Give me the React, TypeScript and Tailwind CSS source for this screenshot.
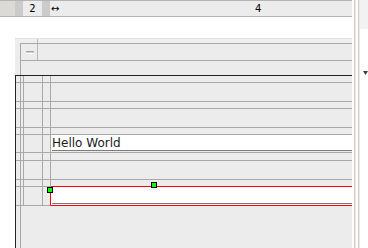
const line = 'border-[#a9a9a9]'

const rows = [7, 19, 7, 19, 7, 18, 8, 19, 7, 19]

function Handle({ className }: { className: string }) {
  return <div className={`absolute w-[6px] h-[6px] bg-[#00ff00] border border-black ${className}`} />
}

function TableRow({ h, index }: { h: number; index: number }) {
  const hello = index === 5
  const selected = index === 9
  const aboveSelected = index === 8
  return (
    <div className="flex shrink-0" style={{ height: h }}>
      <div className={`w-[5px] border-r border-b ${line}`} />
      <div className={`w-[3px] border-r border-b ${line}`} />
      <div className={`w-[19px] border-r border-b ${line}`} />
      <div className={`w-[8px] border-b ${line} border-r ${selected ? 'border-r-[#ff0000]' : ''}`} />
      <div
        className={`flex-1 border-b flex flex-col ${
          selected || aboveSelected ? 'border-[#ff0000]' : line
        } ${selected ? 'bg-white' : ''}`}
      >
        {hello && (
          <>
            <div className="h-[15px] bg-white pl-[1px] pt-[1px] text-[12px] leading-[14px] text-[#1a1a1a] whitespace-nowrap">
              Hello World
            </div>
            <div className="h-px bg-white">
              <div className="ml-[1px] h-px bg-[#787c80]" />
            </div>
          </>
        )}
        {selected && (
          <>
            <div className="h-[16px]" />
            <div className="ml-[1px] h-px bg-[#787c80]" />
          </>
        )}
      </div>
    </div>
  )
}

export default function App() {
  return (
    <div className="relative flex w-[368px] h-[248px] overflow-hidden bg-white font-['DejaVu_Sans',sans-serif] text-black">
      <div className="flex w-[352px] flex-col">
        {/* ruler */}
        <div className="flex h-[17px] shrink-0 border-t border-b border-[#b4b4b4] bg-[#ececec] text-[10px] leading-[15px]">
          <div className="w-[15px] bg-[#dcdad6]" />
          <div className="w-[8px] bg-[#cbcbcb]" />
          <div className="w-[19px] text-center">2</div>
          <div className="w-[8px] bg-[#cbcbcb]" />
          <div className="flex flex-1">
            <span className="w-[12px] pl-[1px]">↔</span>
            <span className="ml-[193px]">4</span>
          </div>
        </div>

        <div className="h-[21px] shrink-0" />

        {/* panel */}
        <div className="ml-[15px] flex flex-1 flex-col bg-[#ececec]">
          <div className="flex h-[5px] shrink-0 border-t border-[#e2e2e2] bg-[#eeeeee]">
            <div className="w-[22px]" />
            <div className="w-px bg-[#b8b8b8]" />
          </div>
          <div className="flex h-[32px] shrink-0">
            <div className="w-[5px]" />
            <div className={`flex flex-1 flex-col border-l border-t ${line}`}>
              <div className={`flex h-[17px] border-b ${line}`}>
                <div className="w-[16px] pl-[5px] pt-[7px]">
                  <div className="h-[3px] w-[8px] border-t border-[#a4a4a4] border-b border-b-white bg-[#d2d2d2]" />
                </div>
                <div className="w-px bg-[#b8b8b8]" />
              </div>
            </div>
          </div>

          {/* table */}
          <div className="flex flex-1 flex-col border-t border-l border-[#222222]">
            {rows.map((h, i) => (
              <TableRow key={i} h={h} index={i} />
            ))}
            <div className="flex flex-1">
              <div className={`w-[5px] border-r ${line}`} />
            </div>
          </div>
        </div>
      </div>

      {/* right strip */}
      <div className="flex flex-1">
        <div className="w-[2px]" />
        <div className="w-px bg-[#d6d0c8]" />
        <div className="w-px bg-[#ebe8e4]" />
        <div className="w-[2px]" />
        <div className="w-px bg-[#d6d0c8]" />
        <div className="w-px bg-[#ebe8e4]" />
        <div className="flex flex-1 flex-col">
          <div className="h-[29px] bg-[#f2f2f2]" />
          <div className="ml-[3px] mt-[42px]">
            <svg width="5" height="4" viewBox="0 0 5 4">
              <polygon points="0,0 5,0 2.5,4" fill="#404040" />
            </svg>
          </div>
        </div>
      </div>

      <Handle className="left-[47px] top-[187px]" />
      <Handle className="left-[151px] top-[182px]" />
    </div>
  )
}
